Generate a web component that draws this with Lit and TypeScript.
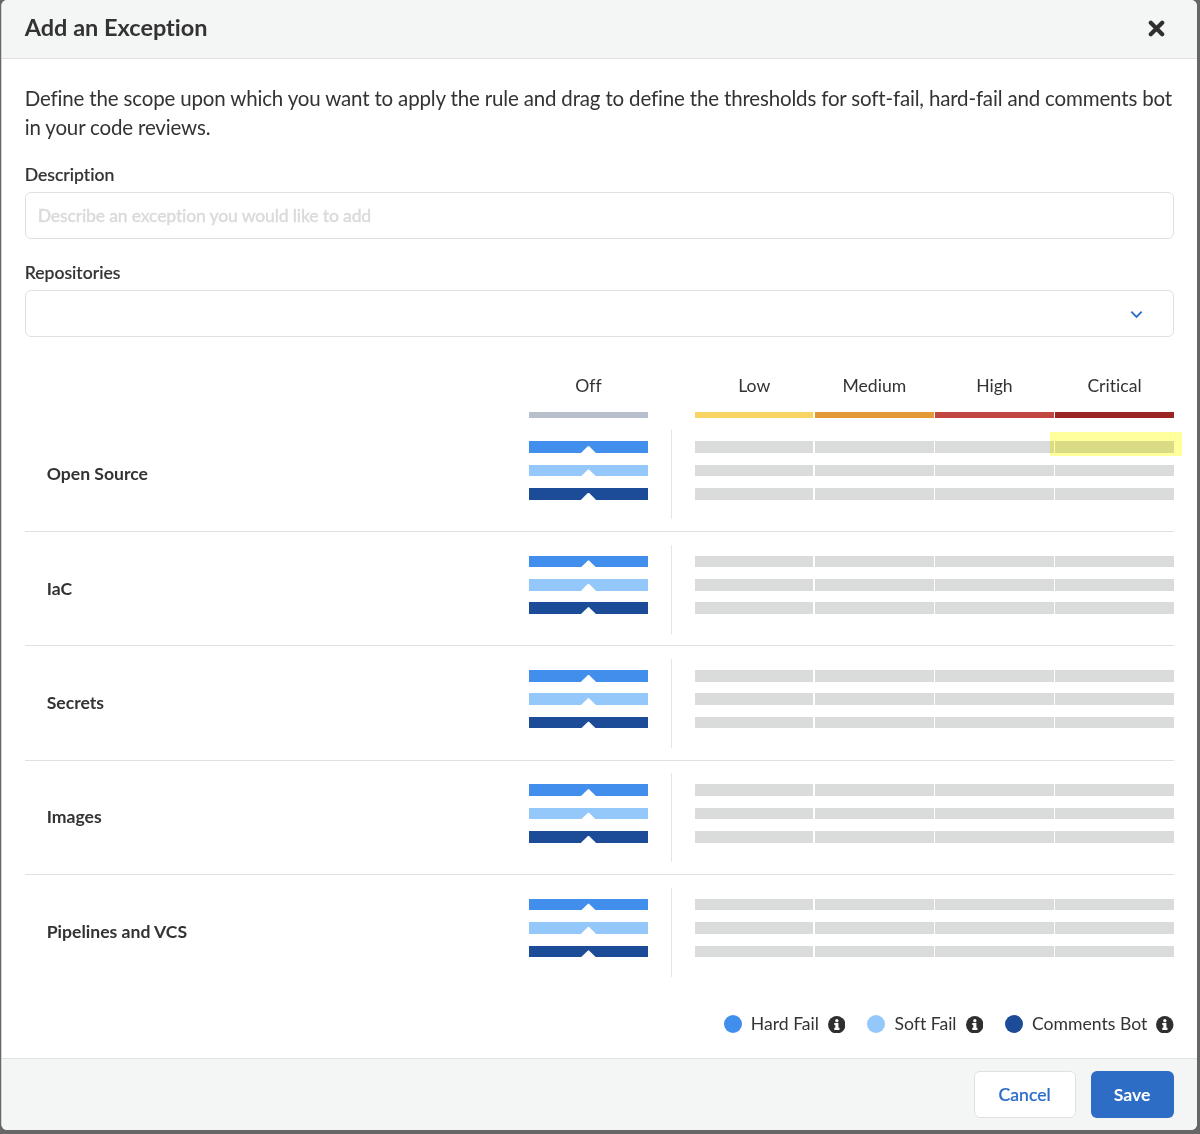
import { LitElement, html, css, svg } from "lit";
import { customElement, property } from "lit/decorators.js";

const CATEGORIES = ["Open Source", "IaC", "Secrets", "Images", "Pipelines and VCS"];
const SEVERITIES = ["Low", "Medium", "High", "Critical"];
const TRACKS = ["hard", "soft", "bot"];
const LEGEND = [
  { kind: "hard", label: "Hard Fail" },
  { kind: "soft", label: "Soft Fail" },
  { kind: "bot", label: "Comments Bot" },
];

const infoIcon = svg`
  <circle cx="8.5" cy="8.5" r="8.5" fill="#2f2f2f"></circle>
  <circle cx="8.6" cy="4.5" r="1.6" fill="#fff"></circle>
  <path d="M6.1 6.9h4v4.6h1v2H6.1v-2h1V8.8h-1z" fill="#fff"></path>`;

@customElement("threshold-row")
class ThresholdRow extends LitElement {
  @property() label = "";
  @property({ type: Boolean }) marked = false;

  static styles = css`
    :host { display: block; box-sizing: border-box; height: 114.4px; border-bottom: 1px solid #dfe1e1; }
    :host([last]) { border-bottom-color: transparent; }
    .row { display: grid; grid-template-columns: 504.6px 118.4px 47.3px 478.8px; height: 100%; }
    .label { align-self: center; padding-left: 22px; font-weight: 700; font-size: 17.6px; line-height: 22px; }
    .stack { display: flex; flex-direction: column; gap: 11.7px; padding-top: 23.6px; }
    .bar { height: 11.7px; display: flex; justify-content: center; align-items: flex-end; }
    .hard { background: #418eec; }
    .soft { background: #94c7fa; }
    .bot { background: #1c4b97; }
    .notch { width: 15px; height: 8px; margin-bottom: -1px; background: #fff; clip-path: polygon(0 100%, 0 88%, 45% 6%, 50% 0, 55% 6%, 100% 88%, 100% 100%); }
    .rule { justify-self: center; width: 1px; height: 89px; margin-top: 12.7px; background: #e4e5e5; }
    .cells { display: grid; grid-template-columns: repeat(4, 1fr); column-gap: 1.6px; height: 11.7px; position: relative; }
    .cell { background: #dadcdb; }
    .mark { position: absolute; right: -8px; top: -9.3px; width: 132px; height: 24px; background: #ffff9b; mix-blend-mode: multiply; }
  `;

  render() {
    return html`<div class="row">
      <div class="label">${this.label}</div>
      <div class="stack">
        ${TRACKS.map((t) => html`<div class="bar ${t}"><div class="notch"></div></div>`)}
      </div>
      <div class="rule"></div>
      <div class="stack">
        ${TRACKS.map(
          (_, i) => html`<div class="cells">
            ${SEVERITIES.map(() => html`<div class="cell"></div>`)}
            ${this.marked && i === 0 ? html`<div class="mark"></div>` : ""}
          </div>`
        )}
      </div>
    </div>`;
  }
}

@customElement("app-root")
class AppRoot extends LitElement {
  static styles = css`
    :host { display: block; font-family: Lato, "Liberation Sans", sans-serif; color: #333; font-variant-ligatures: none; }
    * { box-sizing: border-box; }
    .backdrop { height: 1134px; padding: 0 3px 4px 1px; background: #666; overflow: hidden; }
    .modal { height: 1130px; display: flex; flex-direction: column; background: #fff; border-radius: 6px; overflow: hidden; border-left: 1px solid #d4d5d5; }
    .header { height: 59px; flex: none; display: flex; align-items: center; justify-content: space-between; padding: 0 32.5px 3px 22.7px; background: #f4f6f5; border-bottom: 1px solid #dfe2e1; }
    .title { font-size: 23.5px; font-weight: 700; line-height: 30px; margin-top: -2px; }
    .close { width: 17px; height: 17px; margin-top: 2px; display: block; }
    .body { flex: 1; min-height: 0; padding: 24px 23.2px 0 22.7px; display: flex; flex-direction: column; }
    .intro { font-size: 20.5px; line-height: 29.3px; letter-spacing: -0.163px; white-space: nowrap; position: relative; top: 0.5px; }
    .field-label { font-size: 17.6px; line-height: 22px; font-weight: 500; margin-top: 22px; -webkit-text-stroke: 0.2px currentColor; }
    .field + .field-label { margin-top: 23px; }
    .field { height: 47px; margin-top: 6px; border: 1px solid #dfe1e1; border-radius: 6px; display: flex; align-items: center; padding: 0 29.5px 0 12px; font-size: 17.6px; font-weight: 500; letter-spacing: -0.17px; color: #d9dbdb; -webkit-text-stroke: 0.3px currentColor; }
    .field.select { justify-content: flex-end; }
    .chevron { width: 13px; height: 9px; display: block; margin-top: 2px; }
    .heads { display: grid; grid-template-columns: 504.6px 118.4px 47.3px 478.8px; margin-top: 38px; }
    .levels { display: grid; grid-template-columns: repeat(4, 1fr); column-gap: 1.6px; }
    .head { display: flex; flex-direction: column; align-items: center; font-size: 17.6px; line-height: 22px; }
    .swatch { align-self: stretch; height: 6px; margin-top: 15px; }
    .off { background: #b8bfcc; }
    .low { background: #fad463; }
    .medium { background: #e39a35; }
    .high { background: #c14642; }
    .critical { background: #9b2522; }
    .legend { display: flex; justify-content: flex-end; gap: 22px; margin-top: 22.3px; }
    .entry { display: flex; align-items: center; font-size: 17.6px; line-height: 24px; }
    .dot { width: 18px; height: 18px; border-radius: 50%; margin-right: 9px; }
    .hard { background: #418eec; }
    .soft { background: #94c7fa; }
    .bot { background: #1c4b97; }
    .info { width: 17.5px; height: 17.5px; margin: 1px 0 0 9px; display: block; }
    .footer { height: 72px; flex: none; display: flex; justify-content: flex-end; align-items: center; gap: 15px; padding: 0 23.4px 0 0; background: #f4f6f5; border-top: 1px solid #dfe2e1; }
    .btn { height: 47px; border-radius: 6px; font-family: inherit; font-size: 17.6px; font-weight: 500; padding: 0; }
    .cancel { width: 102px; background: #fff; color: #2c6dc8; border: 1px solid #dfe1e1; -webkit-text-stroke: 0.2px currentColor; }
    .save { width: 83px; background: #2d6dc6; color: #fff; border: 0; font-weight: 700; }
  `;

  render() {
    return html`<div class="backdrop"><div class="modal">
      <div class="header">
        <div class="title">Add an Exception</div>
        <svg class="close" viewBox="0 0 17 17"><path d="M2.8 2.8 14.2 14.2M14.2 2.8 2.8 14.2" stroke="#2f2f2f" stroke-width="4.2" stroke-linecap="round"></path></svg>
      </div>
      <div class="body">
        <div class="intro">Define the scope upon which you want to apply the rule and drag to define the thresholds for soft-fail, hard-fail and comments bot<br />in your code reviews.</div>
        <div class="field-label">Description</div>
        <div class="field">Describe an exception you would like to add</div>
        <div class="field-label">Repositories</div>
        <div class="field select">
          <svg class="chevron" viewBox="0 0 13 9"><path d="M1.3 1.6 6.5 6.9 11.7 1.6" fill="none" stroke="#2c6dc8" stroke-width="1.8"></path></svg>
        </div>
        <div class="heads">
          <div></div>
          <div class="head">Off<div class="swatch off"></div></div>
          <div></div>
          <div class="levels">
            ${SEVERITIES.map((s) => html`<div class="head">${s}<div class="swatch ${s.toLowerCase()}"></div></div>`)}
          </div>
        </div>
        ${CATEGORIES.map(
          (c, i) => html`<threshold-row .label=${c} .marked=${i === 0} ?last=${i === CATEGORIES.length - 1}></threshold-row>`
        )}
        <div class="legend">
          ${LEGEND.map(
            (l) => html`<div class="entry"><span class="dot ${l.kind}"></span>${l.label}<svg class="info" viewBox="0 0 17 17">${infoIcon}</svg></div>`
          )}
        </div>
      </div>
      <div class="footer">
        <button class="btn cancel">Cancel</button>
        <button class="btn save">Save</button>
      </div>
    </div></div>`;
  }
}
